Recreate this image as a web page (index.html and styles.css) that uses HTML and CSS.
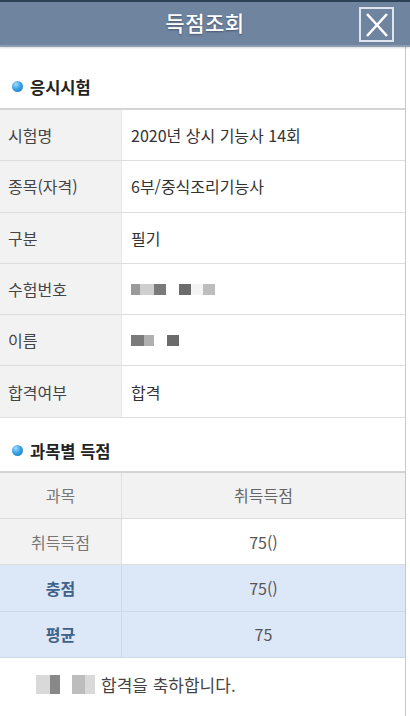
FILE: index.html
```html
<!DOCTYPE html>
<html lang="ko">
<head>
<meta charset="utf-8">
<link rel="stylesheet" href="styles.css">
</head>
<body>
<div class="page">
  <header class="topbar">
    <h1 class="title">득점조회</h1>
    <button class="close" aria-label="닫기">
      <svg viewBox="0 0 30 30" width="30" height="30"><path d="M5 4 L25 26 M25 4 L5 26" stroke="#fff" stroke-width="2.6" fill="none"/></svg>
    </button>
  </header>
  <div class="content">
    <h2 class="section"><span class="dot"></span>응시시험</h2>
    <div class="info">
      <div class="row"><div class="lab">시험명</div><div class="val">2020년 상시 기능사 14회</div></div>
      <div class="row"><div class="lab">종목(자격)</div><div class="val">6부/중식조리기능사</div></div>
      <div class="row"><div class="lab">구분</div><div class="val">필기</div></div>
      <div class="row"><div class="lab">수험번호</div><div class="val"><span class="blur b1"><i class="c9"></i><i class="cc"></i><i class="c7"></i><i class="ce"></i><i class="c6"></i><i class="cf"></i><i class="cb"></i></span></div></div>
      <div class="row"><div class="lab">이름</div><div class="val"><span class="blur b2"><i class="c7"></i><i class="ca"></i><i class="cw"></i><i class="c6"></i></span></div></div>
      <div class="row"><div class="lab">합격여부</div><div class="val">합격</div></div>
    </div>
    <h2 class="section s2"><span class="dot"></span>과목별 득점</h2>
    <div class="score">
      <div class="srow head"><div class="slab">과목</div><div class="sval">취득득점</div></div>
      <div class="srow"><div class="slab">취득득점</div><div class="sval white">75()</div></div>
      <div class="srow total"><div class="slab">충점</div><div class="sval">75()</div></div>
      <div class="srow total"><div class="slab">평균</div><div class="sval">75</div></div>
    </div>
    <p class="congrats"><span class="blur b3"><i class="cd"></i><i class="c8"></i><i class="cw"></i><i class="cb"></i><i class="cd"></i></span>합격을 축하합니다.</p>
  </div>
</div>
</body>
</html>
```

FILE: styles.css
```css
* { box-sizing: border-box; }
html, body { margin: 0; padding: 0; }
body {
  width: 410px;
  height: 716px;
  background: #fff;
  font-family: "Noto Sans CJK KR", "Noto Sans", "Liberation Sans", sans-serif;
  overflow: hidden;
}
.page {
  width: 410px;
  min-height: 716px;
  background: #fff;
}
.topbar {
  height: 47px;
  background: #6e849f;
  border-top: 2px solid #2e4256;
  border-bottom: 2px solid #8d9cb1;
  display: flex;
  align-items: center;
  justify-content: center;
  position: relative;
  box-shadow: 0 1px 2px rgba(0,0,0,0.15);
}
.title {
  margin: 0;
  color: #fff;
  font-size: 21px;
  font-weight: 500;
  letter-spacing: 0.5px;
  text-shadow: 0 1px 2px rgba(0,0,0,0.35);
  margin-top: -3px;
}
.close {
  position: absolute;
  right: 16px;
  top: 5px;
  width: 35px;
  height: 35px;
  padding: 0;
  border: 2px solid #dfe5ee;
  background: transparent;
  display: flex;
  align-items: center;
  justify-content: center;
}
.content {
  width: 406px;
  border-right: 1px solid #c8c8c8;
  min-height: 669px;
}
.section {
  margin: 0;
  height: 61px;
  display: flex;
  align-items: center;
  padding-left: 12px;
  padding-top: 18px;
  font-size: 16.5px;
  font-weight: 700;
  color: #222;
}
.section.s2 { height: 53px; padding-top: 13px; }
.dot {
  width: 11px;
  height: 11px;
  border-radius: 50%;
  background: radial-gradient(circle at 35% 30%, #9fdcff 0%, #3aa3e6 45%, #1670b8 100%);
  margin-right: 7px;
}
.info {
  border-top: 2px solid #d4d4d4;
}
.row {
  display: flex;
  height: 51.3px;
  border-bottom: 1.5px solid #dedede;
}
.lab {
  width: 122px;
  background: #f2f2f2;
  border-right: 1px solid #e6e6e6;
  display: flex;
  align-items: center;
  padding-left: 8px;
  font-size: 16px;
  color: #444;
}
.val {
  flex: 1;
  display: flex;
  align-items: center;
  padding-left: 9px;
  font-size: 16px;
  color: #333;
}
.blur { display: inline-flex; height: 11px; }
.blur i { display: block; height: 100%; }
.b1 i { width: 12px; }
.b1 i:first-child { width: 9px; }
.b1 i.cc { width: 14px; }
.b1 i.ce { width: 13px; }
.b2 i { width: 12px; }
.b2 i:first-child { width: 13px; }
.b2 i.ca { width: 10px; }
.b2 i.cw { width: 13px; }
.b3 { height: 19px; margin-right: 6px; margin-left: 0; }
.b3 i { width: 12px; }
.b3 i:first-child { width: 14px; }
.b3 i.c8 { width: 10px; }
.b3 i.cw { width: 12px; }
.b3 i.cb { width: 13px; }
.b3 i:last-child { width: 10px; }
.c6 { background: #6b6b6b; }
.c7 { background: #7a7a7a; }
.c8 { background: #888; }
.c9 { background: #9a9a9a; }
.ca { background: #b0b0b0; }
.cb { background: #bdbdbd; }
.cc { background: #cfcfcf; }
.cd { background: #d9d9d9; }
.ce { background: #fff; }
.cf { background: #f4f4f4; }
.cw { background: #fff; }
.score {
  border-top: 2px solid #d4d4d4;
}
.srow {
  display: flex;
  height: 46.3px;
  border-bottom: 1.5px solid #dcdcdc;
  font-size: 16px;
}
.slab {
  width: 122px;
  border-right: 1px solid #e0e0e0;
  display: flex;
  align-items: center;
  justify-content: center;
  background: #f2f2f2;
  color: #777;
}
.sval {
  flex: 1;
  display: flex;
  align-items: center;
  justify-content: center;
  color: #666;
  background: #f2f2f2;
}
.sval.white { background: #fff; color: #555; }
.srow.total { background: #dce7f8; border-bottom-color: #cdd8ea; }
.srow.total .slab {
  background: #dce7f8;
  border-right-color: #cdd8ea;
  color: #3f6289;
  font-weight: 700;
}
.srow.total .sval { background: #dce7f8; color: #555; }
.congrats {
  margin: 0;
  padding: 14px 0 0 36px;
  display: flex;
  align-items: center;
  font-size: 17px;
  color: #444;
}
```
